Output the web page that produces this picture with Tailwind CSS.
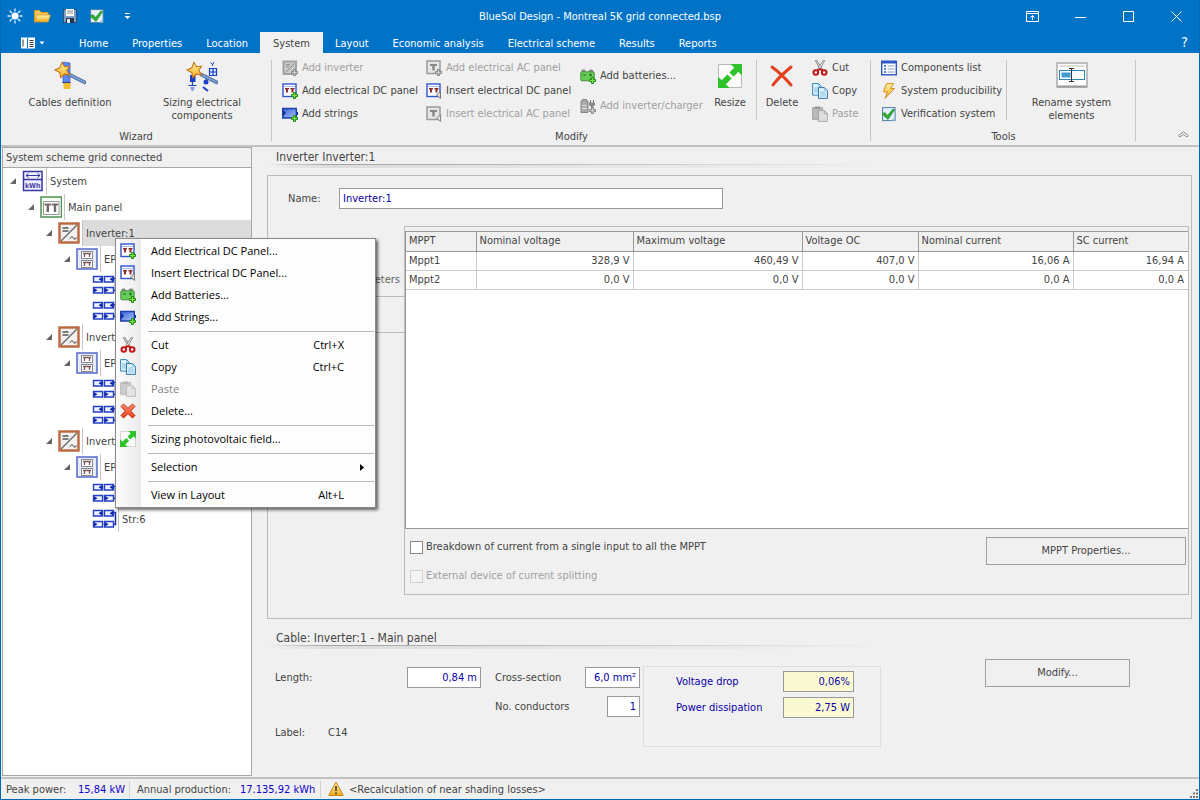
<!DOCTYPE html>
<html lang="en">
<head>
<meta charset="utf-8">
<meta name="viewport" content="width=device-width, initial-scale=1">
<title>BlueSol Design - Montreal 5K grid connected.bsp</title>
<script src="https://cdn.jsdelivr.net/npm/@tailwindcss/browser@4"></script>
</head>
<body class="flex min-h-screen flex-col border border-t-0 border-[#0067b4] bg-[#f0f0f0] font-['DejaVu_Sans_Condensed','DejaVu_Sans',sans-serif] text-[11px] leading-4 text-[#444]">

<!-- Shared icon symbols -->
<svg class="absolute size-0" aria-hidden="true">
  <defs>
    <linearGradient id="gold" x1="0" y1="0" x2="0" y2="1"><stop offset="0" stop-color="#fff6a8"/><stop offset="1" stop-color="#f5a81c"/></linearGradient>
    <linearGradient id="blueFill" x1="0" y1="0" x2="1" y2="1"><stop offset="0" stop-color="#3a63d8"/><stop offset="1" stop-color="#a9c2f7"/></linearGradient>
    <linearGradient id="redX" x1="0" y1="0" x2="0" y2="1"><stop offset="0" stop-color="#ff9070"/><stop offset="1" stop-color="#e8401c"/></linearGradient>
  </defs>
  <symbol id="plus" viewBox="0 0 7 7"><path d="M2.500.5h2v2h2v2h-2v2h-2v-2h-2v-2h2z" fill="#7ee04a" stroke="#1d8a12"/></symbol>
  <symbol id="plusGray" viewBox="0 0 7 7"><path d="M2.500.5h2v2h2v2h-2v2h-2v-2h-2v-2h2z" fill="#ccc" stroke="#858585"/></symbol>
  <symbol id="dcPanel" viewBox="0 0 16 16">
    <rect x="1" y="1" width="13" height="12.500" fill="#fff" stroke="#2f55cc" stroke-width="1.400"/>
    <path d="M2 3.500h11" stroke="#a9bce8"/>
    <path d="M3 5h4v1.600H6V9.500H4V6.600H3zM8.500 5h4v1.600h-1V9.500h-2V6.600h-1z" fill="#8d2f2f"/>
  </symbol>
  <symbol id="dcAdd" viewBox="0 0 16 16"><use href="#dcPanel" width="16" height="16"/><use href="#plus" x="9" y="9" width="7" height="7"/></symbol>
  <symbol id="dcInsert" viewBox="0 0 16 16"><use href="#dcPanel" width="16" height="16"/><path d="M14.500 8.500v7l-4-3.500z" fill="#ddd" stroke="#777"/></symbol>
  <symbol id="acPanel" viewBox="0 0 16 16">
    <rect x="1" y="1" width="13" height="12.500" fill="#e6e6e6" stroke="#9a9a9a" stroke-width="1.500"/>
    <path d="M4 4h7v2H8.700v4.500H6.300V6H4z" fill="#888"/>
  </symbol>
  <symbol id="acAdd" viewBox="0 0 16 16"><use href="#acPanel" width="16" height="16"/><use href="#plusGray" x="9" y="9" width="7" height="7"/></symbol>
  <symbol id="acInsert" viewBox="0 0 16 16"><use href="#acPanel" width="16" height="16"/><path d="M14.500 8.500v7l-4-3.500z" fill="#ddd" stroke="#888"/></symbol>
  <symbol id="invAdd" viewBox="0 0 16 16">
    <rect x="1.500" y="1.500" width="12.500" height="12.500" fill="#c9c9c9" stroke="#a3a3a3" stroke-width="2"/>
    <path d="M3.500 12.500L12.500 3.500M4 4.500h4M4 6.500h3" stroke="#8c8c8c" fill="none"/>
    <use href="#plusGray" x="9" y="9" width="7" height="7"/>
  </symbol>
  <symbol id="strAdd" viewBox="0 0 16 16">
    <path d="M.7 2.500h13.600v9.500H.7z" fill="url(#blueFill)" stroke="#1d3fae" stroke-width="1.400"/>
    <path d="M1 4l3 3-3 3zM15 6v3h1V6z" fill="#102c90"/>
    <use href="#plus" x="9" y="9" width="7" height="7"/>
  </symbol>
  <symbol id="batAdd" viewBox="0 0 16 16">
    <path d="M2 4V2h3v2M9.500 4V2h3v2" fill="#9a9a9a" stroke="#777" stroke-width=".8"/>
    <rect x=".8" y="3.800" width="13.400" height="9" rx="1" fill="#66cc55" stroke="#4c8a44"/>
    <path d="M3 7h3M10.500 5.500v3M9 7h3" stroke="#1d6a20"/>
    <use href="#plus" x="9" y="9" width="7" height="7"/>
  </symbol>
  <symbol id="chgAdd" viewBox="0 0 16 16">
    <path d="M1 3h1.500V1.500h4V3H8v11.500H1z" fill="#aaa" stroke="#858585"/><path d="M2 7.500h5M2 10.500h5" stroke="#ddd"/>
    <path d="M10.500 2v3M13.500 2v3" stroke="#777"/><path d="M9 4.500h6v2.500l-2 2v2h-2V9L9 7z" fill="#8a8a8a"/>
    <use href="#plusGray" x="9" y="9" width="7" height="7"/>
  </symbol>
  <symbol id="cut" viewBox="0 0 16 16">
    <path d="M3.300.6L4.800.4 11 10 9 10.800z" fill="#ddd" stroke="#777" stroke-width=".8"/>
    <path d="M12.700.6L11.200.4 5 10l2 .8z" fill="#f4f4f4" stroke="#777" stroke-width=".8"/>
    <circle cx="3.800" cy="12.500" r="2.300" fill="#fff" stroke="#c01818" stroke-width="2"/>
    <circle cx="12.200" cy="12.500" r="2.300" fill="#fff" stroke="#c01818" stroke-width="2"/>
    <path d="M5 10.500l3-1.500 3 1.500" stroke="#c01818" stroke-width="1.800" fill="none"/>
  </symbol>
  <symbol id="copy" viewBox="0 0 16 16">
    <path d="M.6.600h6l2.500 2.500v9H.6z" fill="#e6f5ff" stroke="#3585bb"/><path d="M6.500.8v2.500H9M2 5h5M2 7h4M2 9h4" stroke="#7bbbe0" fill="none"/>
    <path d="M6.500 4.600h6l2.900 2.900v7.900H6.500z" fill="#e6f5ff" stroke="#2c76aa"/><path d="M12.300 5v2.800h3M8 9h5M8 11h6M8 13h6" stroke="#86c2e4" fill="none"/>
  </symbol>
  <symbol id="paste" viewBox="0 0 16 16">
    <path d="M.6 1.600h10v12H.6z" fill="#b9b9b9" stroke="#a5a5a5"/><path d="M3 .500h5v2.500H3z" fill="#999"/>
    <path d="M6.500 4.600h6l2.900 2.900v7.900H6.500z" fill="#dedede" stroke="#a9a9a9"/><path d="M12.300 5v2.800h3" stroke="#a9a9a9" fill="none"/>
  </symbol>
  <symbol id="delX" viewBox="0 0 16 16"><path d="M3.500 1L8 5.300 12.500 1 15 3.500 10.700 8l4.300 4.500-2.500 2.500L8 10.700 3.500 15 1 12.500 5.300 8 1 3.500z" fill="url(#redX)" stroke="#c43214"/></symbol>
  <symbol id="resize" viewBox="0 0 24 24">
    <path d="M.5.5h23v23H.5z" fill="#fbfbfb" stroke="#b4bcb0"/>
    <path d="M12.500 0H24v11.500zM0 12.500L11.500 24H0z" fill="#2fc32b"/>
    <path d="M20 4L13.500 10.500M11.500 12.500L4 20" stroke="#2fc32b" stroke-width="6"/>
  </symbol>
  <symbol id="list" viewBox="0 0 16 16">
    <rect x=".7" y="1.200" width="14.600" height="13.600" fill="#fff" stroke="#2b55c4" stroke-width="1.400"/><path d="M1 2.500h14" stroke="#2b55c4" stroke-width="2"/>
    <path d="M3 6h2M3 9h2M3 12h2" stroke="#2b55c4" stroke-width="1.500"/><path d="M6.500 6h7M6.500 9h7M6.500 12h7" stroke="#8d9ab8"/>
  </symbol>
  <symbol id="bolt" viewBox="0 0 16 16"><path d="M5.500.6h7L9.500 5.500h4L4 15.400l2.500-6.500H2.500z" fill="url(#gold)" stroke="#d58a1a"/></symbol>
  <symbol id="verify" viewBox="0 0 16 16">
    <rect x="1.600" y="1.600" width="12.500" height="13" fill="#e4f0fb" stroke="#4d7fa6"/>
    <path d="M10.500 14.500l3.500-4v4z" fill="#9cc3e0"/>
    <path d="M1 8l3-1.500 2.500 3L12 3l1.500.8L7 13.500z" fill="#2fae33" stroke="#17801c" stroke-width=".6"/>
  </symbol>
  <symbol id="star" viewBox="0 0 32 32">
    <path d="M15 13l17 8.500-1 2.500-17-8.500z" fill="#7fa4d8" stroke="#3a5a8c" stroke-width=".9"/>
    <path d="M8 2.500l2.500 4.200 5-.4-2.700 4.200 2.900 4.500-5.200-.9-3.800 3.500-.9-5L1 10l4.800-2.200z" fill="url(#gold)" stroke="#c4761a" stroke-width="1.100"/>
  </symbol>
  <symbol id="cables" viewBox="0 0 32 32">
    <path d="M9 2l7 1v20H9z" fill="#5b86ee" stroke="#3759bd" stroke-width=".7"/><path d="M9.500 23h7v6h-7z" fill="#eebb33"/><path d="M8.500 22.500h8" stroke="#2b3f7c"/>
    <use href="#star" width="32" height="32"/>
  </symbol>
  <symbol id="sizing" viewBox="0 0 32 32">
    <path d="M23.500 8.500h7v7h-7zM27 8.500v7M23.500 12h7" fill="#dce8ff" stroke="#1c3fc4" stroke-width="1.200"/><path d="M24.500 2.500l2 2M28 2l-2 4" stroke="#1c3fc4"/>
    <path d="M4 15h5.500v7H4z" fill="#1c3fc4"/><path d="M6.500 22v3M2.500 25.500h8M4.500 28h4M5.500 30h2" stroke="#1c3fc4" stroke-width="1.200"/>
    <path d="M20.500 15v8" stroke="#1c3fc4" stroke-width="1.200"/><circle cx="20" cy="22" r="2.500" fill="#1c3fc4"/><path d="M17 27l5 4" stroke="#1c3fc4" stroke-width="2"/>
    <use href="#star" width="32" height="32"/>
  </symbol>
  <symbol id="rename" viewBox="0 0 32 26">
    <rect x="1" y="1" width="30" height="24" fill="#fff" stroke="#aaa" stroke-width="1.500"/><path d="M1.500 24.500h29" stroke="#999" stroke-width="2"/>
    <path d="M3 4h26" stroke="#ddd" stroke-width="2"/>
    <rect x="3.500" y="8.500" width="25" height="9" fill="#fff" stroke="#2a84b5"/><rect x="5.500" y="10.500" width="9" height="5" fill="#3f9ad0"/>
    <path d="M13 6.500h5M13 19.500h5M15.500 6.500v13" stroke="#333"/>
  </symbol>
  <!-- Tree node icons -->
  <symbol id="nSystem" viewBox="0 0 22 22">
    <rect x="1.500" y="1.500" width="18.500" height="19" fill="#eef0ff" stroke="#3a36a0" stroke-width="1.500"/><path d="M1 9.500h19.500" stroke="#3a36a0" stroke-width="1.500"/>
    <path d="M4 5.500h14M6.500 3.500l-2.500 2 2.500 2M15.500 3.500l2.500 2-2.500 2" stroke="#3a36a0" fill="none"/>
  </symbol>
  <symbol id="nPanel" viewBox="0 0 22 22">
    <rect x="1" y="1" width="20.500" height="20" fill="#f2fff2" stroke="#4f9150" stroke-width="1.500"/><rect x="3.500" y="5.500" width="15.500" height="13" fill="#fff" stroke="#999"/>
    <path d="M4.500 7.500h6.500v2H9V16H6.500V9.500h-2zM11.800 7.500h6.400v2h-2V16h-2.400V9.500h-2z" fill="#74696a"/>
  </symbol>
  <symbol id="nInv" viewBox="0 0 22 22">
    <rect x="1.500" y="1.500" width="19" height="19" fill="#f4f2f0" stroke="#b8683c" stroke-width="2.400"/>
    <path d="M3 19L19 3" stroke="#666" stroke-width="1.200"/><path d="M4.500 6h6M4.500 9h6" stroke="#555" stroke-width="1.500"/>
    <path d="M12 16.500c1.500-2.500 2.500-2 3.500-.5s2 1.500 3-.5" stroke="#666" stroke-width="1.200" fill="none"/>
  </symbol>
  <symbol id="nEp" viewBox="0 0 22 22">
    <rect x="1" y="1" width="20" height="20" fill="#e6ebff" stroke="#5568c8" stroke-width="1.500"/>
    <rect x="5.500" y="3.500" width="11" height="7" fill="#fff" stroke="#888"/><rect x="5.500" y="12.500" width="11" height="7" fill="#fff" stroke="#888"/>
    <path d="M7 5.500h8M8.500 5v4M13.500 5v4M7 14.500h8M8.500 14v4M13.500 14v4" stroke="#7a5a58" stroke-width="1.300"/>
  </symbol>
  <symbol id="nStr" viewBox="0 0 26 22">
    <path d="M21 4.500h2.500v12H21" stroke="#1a2fa8" fill="none" stroke-width="1.500"/>
    <path d="M1.500 2.500h9v5.500h-9zM12.500 2.500h9v5.500h-9zM1.500 13.500h9v5.500h-9zM12.500 13.500h9v5.500h-9z" fill="#eef2ff" stroke="#2440c4" stroke-width="1.400"/>
    <path d="M10 3v4.500L6.500 5.200zM21 3v4.500l-3.500-2.300zM2 14v4.500l3.500-2.300zM13 14v4.500l3.500-2.300z" fill="#1226a0"/>
  </symbol>
</svg>

<!-- Title bar and ribbon tabs -->
<header class="-mx-px bg-[#0173c7] text-white">
  <div class="grid h-8 grid-cols-[1fr_auto_1fr] items-center">
    <div class="flex items-center gap-[11px] pl-[7px]">
      <svg class="size-4" viewBox="0 0 16 16"><circle cx="8" cy="8" r="3.500" fill="#fff"/><path d="M8 .5v3M8 12.500v3M.5 8h3M12.500 8h3M2.700 2.700l2.300 2.300M11 11l2.300 2.300M2.700 13.300L5 11M11 5l2.300-2.300" stroke="#dff0ff" stroke-width="1.300"/></svg>
      <button type="button" aria-label="Open"><svg class="block h-4 w-[17px]" viewBox="0 0 17 16"><path d="M.6 14V2.500h5l1.500 2h7V7" fill="#f3c95a" stroke="#d49a28"/><path d="M3 7h13.500L14 14H.6z" fill="url(#gold)" stroke="#d8962a" stroke-width=".7"/></svg></button>
      <button type="button" aria-label="Save"><svg class="block size-4" viewBox="0 0 16 16"><path d="M1.500 1.500h13v13h-13z" fill="#7fa0c4" stroke="#2f4f74"/><path d="M4 1h8v7H4z" fill="#fff"/><path d="M5 3h6M5 5h6" stroke="#888"/><path d="M4 10h8v5H4z" fill="#26364a"/><path d="M5 11h3v4H5z" fill="#dfe8f0"/></svg></button>
      <button type="button" aria-label="Verify"><svg class="block size-4"><use href="#verify"/></svg></button>
      <button type="button" aria-label="Customize quick access" class="ml-2"><svg class="block h-2 w-[7px]" viewBox="0 0 7 8"><path d="M1 1.500h5" stroke="#fff"/><path d="M.5 4h6l-3 3z" fill="#fff"/></svg></button>
    </div>
    <h1 class="pt-px">BlueSol Design - Montreal 5K grid connected.bsp</h1>
    <div class="flex justify-end">
      <button type="button" aria-label="Ribbon display options" class="flex h-8 w-12 items-center justify-center"><svg class="h-[11px] w-[13px]" viewBox="0 0 13 11"><path d="M.5.5h12v10H.5zM.5 2.500h12M6.500 9V4.500M4.500 6.500l2-2 2 2" fill="none" stroke="#fff"/></svg></button>
      <button type="button" aria-label="Minimize" class="flex h-8 w-12 items-center justify-center"><svg class="h-[11px] w-[11px]" viewBox="0 0 11 11"><path d="M0 6.500h11" stroke="#fff"/></svg></button>
      <button type="button" aria-label="Maximize" class="flex h-8 w-12 items-center justify-center"><svg class="size-[11px]" viewBox="0 0 11 11"><path d="M.5.5h10v10H.5z" fill="none" stroke="#fff"/></svg></button>
      <button type="button" aria-label="Close" class="flex h-8 w-12 items-center justify-center"><svg class="size-[11px]" viewBox="0 0 11 11"><path d="M.5.5l10 10M10.500.5l-10 10" stroke="#fff"/></svg></button>
    </div>
  </div>
  <nav class="flex h-[21px] items-stretch" aria-label="Ribbon tabs">
    <button type="button" aria-label="Application menu" class="flex w-[67px] items-center pl-[21px]"><svg class="h-3 w-6" viewBox="0 0 24 12"><path d="M0 .5h14v11H0z" fill="#fff"/><path d="M6.500 1v10" stroke="#0173c7"/><path d="M8.500 3.500h4M8.500 5.500h4M8.500 7.500h4M8.500 9.500h4M2 2.500v7" stroke="#333"/><path d="M18.500 4.500h5L21 7.500z" fill="#fff"/></svg></button>
    <button type="button" class="px-3 pt-[3px]">Home</button>
    <button type="button" class="px-3 pt-[3px]">Properties</button>
    <button type="button" class="px-3 pt-[3px]">Location</button>
    <button type="button" class="bg-[#f0f0f0] px-[13px] pt-[3px] text-[#444]">System</button>
    <button type="button" class="px-3 pt-[3px]">Layout</button>
    <button type="button" class="px-3 pt-[3px]">Economic analysis</button>
    <button type="button" class="px-3 pt-[3px]">Electrical scheme</button>
    <button type="button" class="px-3 pt-[3px]">Results</button>
    <button type="button" class="px-3 pt-[3px]">Reports</button>
    <button type="button" aria-label="Help" class="ml-auto pr-3 pb-px text-sm">?</button>
  </nav>
</header>

<!-- Ribbon -->
<div class="flex border-b-2 border-[#c1c1c1] pt-[3px]">
  <section class="relative flex w-[271px] flex-col pr-px">
    <div class="flex h-[70px] items-start justify-center gap-3">
      <button type="button" class="flex w-[120px] flex-col items-center gap-1 pt-1 leading-[13px]"><svg class="size-8"><use href="#cables"/></svg>Cables definition</button>
      <button type="button" class="flex w-[120px] flex-col items-center gap-1 pt-1 leading-[13px]"><svg class="size-8"><use href="#sizing"/></svg>Sizing electrical<br>components</button>
    </div>
    <h2 class="pt-[3px] text-center">Wizard</h2>
    <div class="absolute inset-y-1 right-0 w-px bg-[#c6c6c6]"></div>
  </section>
  <section class="relative flex w-[599px] flex-col">
    <div class="flex h-[70px] items-start pl-[10px]">
      <div class="flex w-36 flex-col">
        <button type="button" disabled class="flex h-[23px] items-center gap-1 whitespace-nowrap text-[#a0a0a0]"><svg class="size-4 shrink-0"><use href="#invAdd"/></svg>Add inverter</button>
        <button type="button" class="flex h-[23px] items-center gap-1 whitespace-nowrap"><svg class="size-4 shrink-0"><use href="#dcAdd"/></svg>Add electrical DC panel</button>
        <button type="button" class="flex h-[23px] items-center gap-1 whitespace-nowrap"><svg class="size-4 shrink-0"><use href="#strAdd"/></svg>Add strings</button>
      </div>
      <div class="flex w-[154px] flex-col">
        <button type="button" disabled class="flex h-[23px] items-center gap-1 whitespace-nowrap text-[#a0a0a0]"><svg class="size-4 shrink-0"><use href="#acAdd"/></svg>Add electrical AC panel</button>
        <button type="button" class="flex h-[23px] items-center gap-1 whitespace-nowrap"><svg class="size-4 shrink-0"><use href="#dcInsert"/></svg>Insert electrical DC panel</button>
        <button type="button" disabled class="flex h-[23px] items-center gap-1 whitespace-nowrap text-[#a0a0a0]"><svg class="size-4 shrink-0"><use href="#acInsert"/></svg>Insert electrical AC panel</button>
      </div>
      <div class="flex w-32 flex-col pt-[5px]">
        <button type="button" class="flex h-[30px] items-center gap-1 whitespace-nowrap"><svg class="size-4 shrink-0"><use href="#batAdd"/></svg>Add batteries...</button>
        <button type="button" disabled class="flex h-[30px] items-center gap-1 whitespace-nowrap text-[#a0a0a0]"><svg class="size-4 shrink-0"><use href="#chgAdd"/></svg>Add inverter/charger</button>
      </div>
      <button type="button" class="flex w-11 flex-col items-center gap-2 pt-2 leading-[13px]"><svg class="size-6"><use href="#resize"/></svg>Resize</button>
      <div class="mx-1 mt-1 h-[60px] w-px bg-[#c6c6c6]"></div>
      <button type="button" class="flex w-[42px] flex-col items-center gap-2 pt-2 leading-[13px]"><svg class="size-6" viewBox="0 0 24 24"><path d="M2 3c7 5 13 11 19 18M21 3C15 8 8 14 3 21" stroke="#e3401c" stroke-width="3" fill="none" stroke-linecap="round"/></svg>Delete</button>
      <div class="ml-[9px] flex flex-col">
        <button type="button" class="flex h-[23px] items-center gap-1 whitespace-nowrap"><svg class="size-4 shrink-0"><use href="#cut"/></svg>Cut</button>
        <button type="button" class="flex h-[23px] items-center gap-1 whitespace-nowrap"><svg class="size-4 shrink-0"><use href="#copy"/></svg>Copy</button>
        <button type="button" disabled class="flex h-[23px] items-center gap-1 whitespace-nowrap text-[#a0a0a0]"><svg class="size-4 shrink-0"><use href="#paste"/></svg>Paste</button>
      </div>
    </div>
    <h2 class="pt-[3px] text-center">Modify</h2>
    <div class="absolute inset-y-1 right-0 w-px bg-[#c6c6c6]"></div>
  </section>
  <section class="relative flex w-[265px] flex-col">
    <div class="flex h-[70px] items-start pl-[10px]">
      <div class="flex w-[125px] flex-col">
        <button type="button" class="flex h-[23px] items-center gap-1 whitespace-nowrap"><svg class="size-4 shrink-0"><use href="#list"/></svg>Components list</button>
        <button type="button" class="flex h-[23px] items-center gap-1 whitespace-nowrap"><svg class="size-4 shrink-0"><use href="#bolt"/></svg>System producibility</button>
        <button type="button" class="flex h-[23px] items-center gap-1 whitespace-nowrap"><svg class="size-4 shrink-0"><use href="#verify"/></svg>Verification system</button>
      </div>
      <div class="mt-1 h-[60px] w-px bg-[#c6c6c6]"></div>
      <button type="button" class="flex flex-1 flex-col items-center gap-2 pt-1.5 leading-[13px]"><svg class="h-[26px] w-8"><use href="#rename"/></svg>Rename system<br>elements</button>
    </div>
    <h2 class="pt-[3px] text-center">Tools</h2>
    <div class="absolute inset-y-1 right-0 w-px bg-[#c6c6c6]"></div>
  </section>
  <button type="button" aria-label="Collapse ribbon" class="mt-auto ml-auto pr-[10px] pb-1.5"><svg class="block h-2 w-[11px]" viewBox="0 0 11 8"><path d="M.7 4.500L5.500.8l4.800 3.700L9 6 5.500 3.300 2 6z" fill="#fff" stroke="#777" stroke-width=".9"/></svg></button>
</div>

<div class="relative flex flex-1">
  <!-- System tree -->
  <aside class="mb-px ml-px flex w-[250px] flex-col border border-[#a6a6a6] bg-white">
    <h2 class="h-5 border-b border-[#a6a6a6] bg-[#f0f0f0] pl-[3px] leading-5">System scheme grid connected</h2>
    <ul id="tree"></ul>
  </aside>

  <!-- Details -->
  <main class="flex min-w-0 flex-1 flex-col pr-[7px] pl-[15px]">
    <h2 class="h-[17px] pt-0.5 pl-[9px] text-xs leading-4">Inverter Inverter:1</h2>
    <div class="h-1 w-2/3 bg-linear-to-r from-transparent via-[#dcdcdc] via-10% to-transparent"><div class="h-px bg-linear-to-r from-transparent via-[#a4a4a4] via-10% to-transparent"></div></div>
    <div class="mt-[7px] flex flex-1 flex-col border border-[#bcbcbc] pt-3 pb-[23px] pr-0.5">
      <div class="flex items-center pl-5">
        <label for="name" class="w-[51px]">Name:</label>
        <input id="name" type="text" value="Inverter:1" class="h-[21px] w-[384px] border border-[#999] bg-white px-[3px] text-[#0a00a8]">
      </div>
      <div class="mt-[17px] flex flex-1">
        <nav class="flex w-[136px] flex-col pt-[35px]" aria-label="Inverter pages">
          <button type="button" class="h-9 border-b border-[#bcbcbc] pt-0.5 pr-1 text-right text-[#666]">Parameters</button>
          <button type="button" class="h-9 border-b border-[#bcbcbc] pr-[34px] text-right text-[#666]">Inputs</button>
        </nav>
        <div class="flex min-w-0 flex-1 flex-col border border-[#bcbcbc] pt-1">
          <div class="flex-1 border border-r-0 border-[#999] bg-white">
            <table class="w-full table-fixed border-collapse whitespace-nowrap">
              <colgroup><col class="w-[70px]"><col class="w-[157px]"><col class="w-[169px]"><col class="w-[116px]"><col class="w-[155px]"><col></colgroup>
              <thead>
                <tr class="h-[19px] bg-[#f0f0f0] text-left">
                  <th scope="col" class="border-r border-b border-[#999] px-[3px] font-normal">MPPT</th>
                  <th scope="col" class="border-r border-b border-[#999] px-[3px] font-normal">Nominal voltage</th>
                  <th scope="col" class="border-r border-b border-[#999] px-[3px] font-normal">Maximum voltage</th>
                  <th scope="col" class="border-r border-b border-[#999] px-[3px] font-normal">Voltage OC</th>
                  <th scope="col" class="border-r border-b border-[#999] px-[3px] font-normal">Nominal current</th>
                  <th scope="col" class="border-b border-[#999] px-[3px] font-normal">SC current</th>
                </tr>
              </thead>
              <tbody class="text-right">
                <tr class="h-[19px] border-b border-[#c8ccd0]">
                  <td class="border-r border-[#c8ccd0] px-[3px] text-left">Mppt1</td><td class="border-r border-[#c8ccd0] px-[3px]">328,9 V</td><td class="border-r border-[#c8ccd0] px-[3px]">460,49 V</td><td class="border-r border-[#c8ccd0] px-[3px]">407,0 V</td><td class="border-r border-[#c8ccd0] px-[3px]">16,06 A</td><td class="px-1">16,94 A</td>
                </tr>
                <tr class="h-[19px] border-b border-[#c8ccd0]">
                  <td class="border-r border-[#c8ccd0] px-[3px] text-left">Mppt2</td><td class="border-r border-[#c8ccd0] px-[3px]">0,0 V</td><td class="border-r border-[#c8ccd0] px-[3px]">0,0 V</td><td class="border-r border-[#c8ccd0] px-[3px]">0,0 V</td><td class="border-r border-[#c8ccd0] px-[3px]">0,0 A</td><td class="px-1">0,0 A</td>
                </tr>
              </tbody>
            </table>
          </div>
          <div class="flex items-start justify-between pt-2 pr-0.5 pb-[10px] pl-[5px]">
            <div class="flex flex-col gap-[13px] pt-0.5">
              <label class="flex items-center gap-[3px]"><input type="checkbox" class="size-[13px] appearance-none border border-[#8a8a8a] bg-white checked:bg-[#0173c7]">Breakdown of current from a single input to all the MPPT</label>
              <label class="flex items-center gap-[3px] text-[#a0a0a0]"><input type="checkbox" disabled class="size-[13px] appearance-none border border-[#d0d0d0] bg-[#f4f4f4]">External device of current splitting</label>
            </div>
            <button type="button" class="h-7 w-[200px] border border-[#a0a0a0]">MPPT Properties...</button>
          </div>
        </div>
      </div>
    </div>

    <h2 class="h-[26px] pt-[11px] pl-[9px] text-xs leading-4">Cable: Inverter:1 - Main panel</h2>
    <div class="h-1 w-2/3 bg-linear-to-r from-transparent via-[#dcdcdc] via-10% to-transparent"><div class="h-px bg-linear-to-r from-transparent via-[#a4a4a4] via-10% to-transparent"></div></div>
    <div class="flex items-start pt-[10px] pb-[30px] pl-2">
      <div class="mt-2 grid grid-cols-[53px_79px_74px_104px_55px] items-center gap-y-2">
        <label for="len" class="col-span-2">Length:</label>
        <input id="len" type="text" value="0,84 m" class="h-[21px] border border-[#999] bg-white px-[3px] text-right text-[#0a00a8]">
        <label for="sect" class="pl-[14px]">Cross-section</label>
        <input id="sect" type="text" value="6,0 mm²" class="h-[21px] border border-[#999] bg-white px-[3px] text-right text-[#0a00a8]">
        <label for="cond" class="col-span-2 col-start-4 flex h-[21px] items-center justify-between pl-[14px]">No. conductors
          <input id="cond" type="text" value="1" class="h-[21px] w-[33px] border border-[#999] bg-white px-[3px] text-right text-[#0a00a8]"></label>
        <span class="col-start-1">Label:</span><span class="col-span-2">C14</span>
      </div>
      <div class="mt-[7px] ml-[3px] grid h-[81px] w-[238px] grid-cols-[107px_71px] content-start items-center gap-y-[5px] border border-[#dedede] pt-1 pl-8 text-[#0a00a8]">
        <label for="drop">Voltage drop</label>
        <input id="drop" type="text" readonly value="0,06%" class="h-[21px] border border-[#999] bg-[#fafad2] px-[3px] text-right">
        <label for="diss">Power dissipation</label>
        <input id="diss" type="text" readonly value="2,75 W" class="h-[21px] border border-[#999] bg-[#fafad2] px-[3px] text-right">
      </div>
      <button type="button" class="ml-[104px] h-7 w-[145px] border border-[#a0a0a0]">Modify...</button>
    </div>
  </main>

  <!-- Context menu of the selected inverter -->
  <div role="menu" class="absolute top-[91px] left-[114px] w-[261px] border border-[#8a8a8a] bg-[#fdfdfd] bg-linear-to-r from-[#fbfbfb] to-[#ececec] bg-[length:25px_100%] bg-no-repeat py-px font-['Open_Sans',sans-serif] text-black shadow-[2px_2px_3px_rgba(0,0,0,0.6)]">
    <button type="button" role="menuitem" class="flex h-[22px] w-full items-center gap-[15px] pl-1"><svg class="size-4"><use href="#dcAdd"/></svg>Add Electrical DC Panel...</button>
    <button type="button" role="menuitem" class="flex h-[22px] w-full items-center gap-[15px] pl-1"><svg class="size-4"><use href="#dcInsert"/></svg>Insert Electrical DC Panel...</button>
    <button type="button" role="menuitem" class="flex h-[22px] w-full items-center gap-[15px] pl-1"><svg class="size-4"><use href="#batAdd"/></svg>Add Batteries...</button>
    <button type="button" role="menuitem" class="flex h-[22px] w-full items-center gap-[15px] pl-1"><svg class="size-4"><use href="#strAdd"/></svg>Add Strings...</button>
    <div role="separator" class="mt-[3px] mr-px mb-0.5 ml-8 h-px bg-[#b4b8bc]"></div>
    <button type="button" role="menuitem" class="flex h-[22px] w-full items-center gap-[15px] pr-[31px] pl-1"><svg class="size-4"><use href="#cut"/></svg>Cut<span class="ml-auto">Ctrl+X</span></button>
    <button type="button" role="menuitem" class="flex h-[22px] w-full items-center gap-[15px] pr-[31px] pl-1"><svg class="size-4"><use href="#copy"/></svg>Copy<span class="ml-auto">Ctrl+C</span></button>
    <button type="button" role="menuitem" disabled class="flex h-[22px] w-full items-center gap-[15px] pl-1 text-[#808080]"><svg class="size-4 opacity-70"><use href="#paste"/></svg>Paste</button>
    <button type="button" role="menuitem" class="flex h-[22px] w-full items-center gap-[15px] pl-1"><svg class="size-4"><use href="#delX"/></svg>Delete...</button>
    <div role="separator" class="mt-[3px] mr-px mb-0.5 ml-8 h-px bg-[#b4b8bc]"></div>
    <button type="button" role="menuitem" class="flex h-[22px] w-full items-center gap-[15px] pl-1"><svg class="size-4"><use href="#resize"/></svg>Sizing photovoltaic field...</button>
    <div role="separator" class="mt-[3px] mr-px mb-0.5 ml-8 h-px bg-[#b4b8bc]"></div>
    <button type="button" role="menuitem" class="flex h-[22px] w-full items-center justify-between pr-[11px] pl-[35px]">Selection<svg class="h-[7px] w-1" viewBox="0 0 4 7"><path d="M0 0l4 3.500L0 7z"/></svg></button>
    <div role="separator" class="mt-[3px] mr-px mb-0.5 ml-8 h-px bg-[#b4b8bc]"></div>
    <button type="button" role="menuitem" class="flex h-[22px] w-full items-center justify-between pr-[31px] pl-[35px]">View in Layout<span>Alt+L</span></button>
  </div>
</div>

<!-- Status bar -->
<footer class="flex h-[22px] items-center border-t-2 border-[#c1c1c1]">
  <span class="w-[72px] pt-px pl-[5px] whitespace-nowrap">Peak power:</span>
  <span class="w-[57px] border-r border-[#d0d0d0] pt-px pl-[5px] whitespace-nowrap text-[#1400cc]">15,84 kW</span>
  <span class="w-[103px] pt-px pl-[7px] whitespace-nowrap">Annual production:</span>
  <span class="w-[88px] border-r border-[#d0d0d0] pt-px pl-[7px] whitespace-nowrap text-[#1400cc]">17.135,92 kWh</span>
  <svg class="mr-[5px] ml-[7px] size-4" viewBox="0 0 16 16"><path d="M8 1l7.300 13.500H.7z" fill="url(#gold)" stroke="#c98a10" stroke-linejoin="round"/><path d="M8 5v5M8 11.500v1.800" stroke="#333" stroke-width="1.600"/></svg>
  <span class="pt-px">&lt;Recalculation of near shading losses&gt;</span>
  <svg class="mt-auto ml-auto size-2.5" viewBox="0 0 10 10"><path d="M7 0h2v2H7zM4 3.500h2v2H4zM7 3.500h2v2H7zM1 7h2v2H1zM4 7h2v2H4zM7 7h2v2H7z" fill="#777"/></svg>
</footer>

<script>
  // Each node: indentation level, icon, caption, expandable, selected
  const nodes = [
    [0, 'nSystem', 'System', 1], [1, 'nPanel', 'Main panel', 1],
    [2, 'nInv', 'Inverter:1', 1, 1], [3, 'nEp', 'EP:1', 1], [4, 'nStr', 'Str:1'], [4, 'nStr', 'Str:2'],
    [2, 'nInv', 'Inverter:2', 1], [3, 'nEp', 'EP:2', 1], [4, 'nStr', 'Str:3'], [4, 'nStr', 'Str:4'],
    [2, 'nInv', 'Inverter:3', 1], [3, 'nEp', 'EP:3', 1], [4, 'nStr', 'Str:5'], [4, 'nStr', 'Str:6']
  ];
  // The meter icon carries its unit as a small caption
  const unit = '<text x="10.7" y="18" text-anchor="middle" font-size="7" font-weight="bold" fill="#4a46a8">kWh</text>';
  document.getElementById('tree').innerHTML = nodes.map(([level, icon, text, open, sel]) => `
    <li class="flex h-[26px] items-center" style="padding-left:${level * 18 + 7}px">
      <svg class="mr-1.5 size-[6px] shrink-0" viewBox="0 0 6 6">${open ? '<path d="M6 0v6H0z" fill="#666"/>' : ''}</svg>
      <svg class="${level === 4 ? '-ml-0.5 w-[26px]' : 'w-[22px]'} h-[22px] shrink-0"><use href="#${icon}"/>${level ? '' : unit}</svg>
      <span class="${level === 4 ? '' : 'ml-0.5'} ${sel ? 'bg-[#dcdcdc]' : ''} flex h-[26px] flex-1 items-center border-l border-[#c4c4c4] pt-0.5 pl-[3px]">${text}</span>
    </li>`).join('');
</script>
</body>
</html>
